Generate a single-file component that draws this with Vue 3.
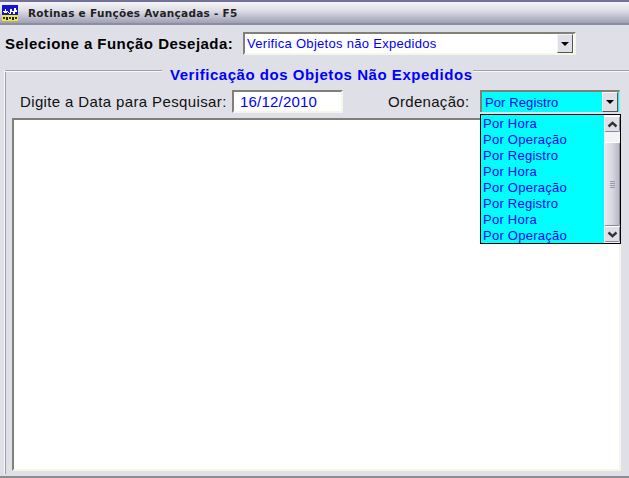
<script setup>
const options = ['Por Hora', 'Por Operação', 'Por Registro', 'Por Hora', 'Por Operação', 'Por Registro', 'Por Hora', 'Por Operação']
</script>

<template>
  <div class="window">
    <header class="titlebar">
      <svg class="logo" width="16" height="16" viewBox="0 0 16 16" shape-rendering="crispEdges">
        <rect width="16" height="16" fill="#1414d0" />
        <rect y="10" width="16" height="6" fill="#f4f000" />
        <path d="M1 6h2v-2h1v2h2v2h2v-4h2v2h2v-3h2v2h1v2h-2v2h-2v-2h-2v2h-2v-2h-2v1h-3z" fill="#fff" />
        <path d="M1 12h2v2h-2zM4 12h2v3h-2zM7 12h2v2h-2zM10 12h2v3h-2zM13 12h2v2h-2z" fill="#1414a0" />
      </svg>
      <span class="title">Rotinas e Funções Avançadas - F5</span>
    </header>

    <div class="fn-row">
      <span class="fn-label">Selecione a Função Desejada:</span>
      <div class="fn-select">
        <span class="fn-value">Verifica Objetos não Expedidos</span>
        <span class="arrow-btn"><i class="tri"></i></span>
      </div>
    </div>

    <section class="group">
      <div class="group-head">
        <span class="line short"></span>
        <span class="legend">Verificação dos Objetos Não Expedidos</span>
        <span class="line"></span>
      </div>
      <div class="filter-row">
        <span class="label date-label">Digite a Data para Pesquisar:</span>
        <div class="date-input">16/12/2010</div>
        <span class="label order-label">Ordenação:</span>
        <div class="order">
          <div class="order-select">
            <span class="order-value">Por Registro</span>
            <span class="arrow-btn small"><i class="tri"></i></span>
          </div>
          <div class="dropdown">
            <ul class="items">
              <li v-for="(o, i) in options" :key="i">{{ o }}</li>
            </ul>
            <div class="scrollbar">
              <span class="sb-btn">
                <svg width="11" height="7" viewBox="0 0 11 7"><path d="M1.5 5.5 5.5 1.8 9.5 5.5" fill="none" stroke="#333" stroke-width="2.4" /></svg>
              </span>
              <span class="sb-gap top"></span>
              <span class="sb-thumb"><i></i><i></i><i></i><i></i></span>
              <span class="sb-btn">
                <svg width="11" height="7" viewBox="0 0 11 7"><path d="M1.5 1.5 5.5 5.2 9.5 1.5" fill="none" stroke="#333" stroke-width="2.4" /></svg>
              </span>
            </div>
          </div>
        </div>
      </div>
      <div class="result"></div>
    </section>
  </div>
</template>

<style>
html, body { margin: 0; background: #dfdfe7; }
</style>

<style scoped>
.window {
  width: 629px;
  height: 478px;
  background: #dfdfe7;
  font-family: "Liberation Sans", Arial, sans-serif;
  display: flex;
  flex-direction: column;
  overflow: hidden;
  box-sizing: border-box;
  border-bottom: 2px solid #8c8c8c;
}
.titlebar {
  height: 25px;
  flex: none;
  box-sizing: border-box;
  display: flex;
  align-items: center;
  padding-left: 2px;
  border-top: 2px solid #72729a;
  border-bottom: 2px solid #8c8ca4;
  background: linear-gradient(#f4f4f8 0%, #dedee6 40%, #a0a0b6 100%);
}
.logo { flex: none; }
.title {
  margin-left: 10px;
  font-family: "DejaVu Sans", sans-serif;
  font-size: 10.5px;
  font-weight: 700;
  color: #222;
  letter-spacing: 0.28px;
}
.fn-row {
  display: flex;
  align-items: flex-start;
  height: 24px;
  margin-top: 7px;
  padding-left: 5px;
  flex: none;
}
.fn-label {
  width: 238px;
  flex: none;
  line-height: 24px;
  font-size: 15px;
  font-weight: 700;
  color: #000;
  letter-spacing: 0.47px;
  white-space: nowrap;
}
.fn-select {
  width: 333px;
  height: 23px;
  box-sizing: border-box;
  background: #fff;
  border: 2px solid;
  border-color: #808078 #f5f5e8 #f5f5e8 #808078;
  display: flex;
  align-items: center;
  justify-content: space-between;
}
.fn-value {
  padding-left: 2px;
  font-size: 13px;
  letter-spacing: 0.3px;
  color: #0000ff;
}
.arrow-btn {
  width: 16px;
  height: 19px;
  box-sizing: border-box;
  background: #dfdfe7;
  border: 1px solid;
  border-color: #f5f5f5 #55554f #55554f #f5f5f5;
  display: flex;
  align-items: center;
  justify-content: center;
  margin-right: 1px;
}
.arrow-btn.small { height: 20px; }
.tri {
  width: 0;
  height: 0;
  border-left: 4px solid transparent;
  border-right: 4px solid transparent;
  border-top: 4px solid #000;
}
.group {
  flex: 1;
  margin: 14px 0 2px 4px;
  border-left: 1px solid #f7f7f7;
  box-shadow: inset 1px 0 0 #a0a0a8;
  display: flex;
  flex-direction: column;
  min-height: 0;
}
.group-head {
  display: flex;
  align-items: flex-start;
  height: 13px;
}
.line {
  flex: 1;
  height: 2px;
  background: #a0a0a8;
  border-bottom: 1px solid #f7f7f7;
  box-sizing: border-box;
}
.line.short { flex: none; width: 157px; }
.legend {
  padding-left: 8px;
  margin-top: -2px;
  line-height: 14px;
  font-size: 15px;
  font-weight: 700;
  color: #0000ff;
  letter-spacing: 0.54px;
  white-space: nowrap;
}
.filter-row {
  display: flex;
  align-items: flex-start;
  height: 24px;
  margin-top: 7px;
  flex: none;
}
.label {
  font-size: 15px;
  color: #111;
  line-height: 24px;
  letter-spacing: 0.3px;
  white-space: nowrap;
}
.date-label { margin-left: 15px; width: 212px; flex: none; letter-spacing: 0.37px; }
.date-input {
  width: 111px;
  height: 23px;
  flex: none;
  box-sizing: border-box;
  background: #fff;
  border: 2px solid;
  border-color: #808078 #f5f5e8 #f5f5e8 #808078;
  color: #0000ff;
  font-size: 15px;
  letter-spacing: 0.2px;
  line-height: 19px;
  padding-left: 6px;
}
.order-label { margin-left: 45px; width: 92px; flex: none; }
.order { position: relative; width: 140px; flex: none; z-index: 1; }
.order-select {
  height: 22px;
  box-sizing: border-box;
  background: #00ffff;
  border: 1px solid;
  border-width: 2px 1px 0 2px;
  border-color: #808078 #d0d0d0 #808078 #808078;
  display: flex;
  align-items: center;
  justify-content: space-between;
}
.order-value {
  padding-left: 3px;
  font-size: 13px;
  letter-spacing: 0.1px;
  color: #0000ff;
}
.dropdown {
  position: absolute;
  left: 0;
  top: 24px;
  width: 141px;
  height: 130px;
  box-sizing: border-box;
  border: 1px solid #000;
  background: #00ffff;
  display: flex;
}
.items {
  list-style: none;
  margin: 0;
  padding: 0;
  flex: 1;
}
.items li {
  height: 16px;
  line-height: 18px;
  padding-left: 2px;
  font-size: 13px;
  letter-spacing: 0.25px;
  color: #0000ff;
  white-space: nowrap;
}
.scrollbar {
  width: 16px;
  flex: none;
  display: flex;
  flex-direction: column;
  padding: 1px 0;
  background: #f4f4f6;
}
.sb-btn {
  height: 16px;
  flex: none;
  box-sizing: border-box;
  background: #dfdfe7;
  border: 1px solid;
  border-color: #fff #8a8a94 #8a8a94 #fff;
  border-radius: 2px;
  display: flex;
  align-items: center;
  justify-content: center;
}
.sb-gap { height: 10px; flex: none; }
.sb-thumb {
  flex: 1;
  box-sizing: border-box;
  border: 1px solid;
  border-color: #fff #8a8a94 #8a8a94 #fff;
  border-radius: 2px;
  background: linear-gradient(90deg, #e8e8ee, #d6d6e0 55%, #b8b8c8);
  display: flex;
  flex-direction: column;
  align-items: center;
  justify-content: center;
  gap: 1px;
}
.sb-thumb i {
  width: 5px;
  height: 1px;
  background: #9a9aa4;
}
.result {
  flex: 1;
  margin: 4px 8px 3px 7px;
  background: #fff;
  border: 2px solid;
  border-color: #808078 #f5f5e8 #f5f5e8 #808078;
  min-height: 0;
}
</style>
